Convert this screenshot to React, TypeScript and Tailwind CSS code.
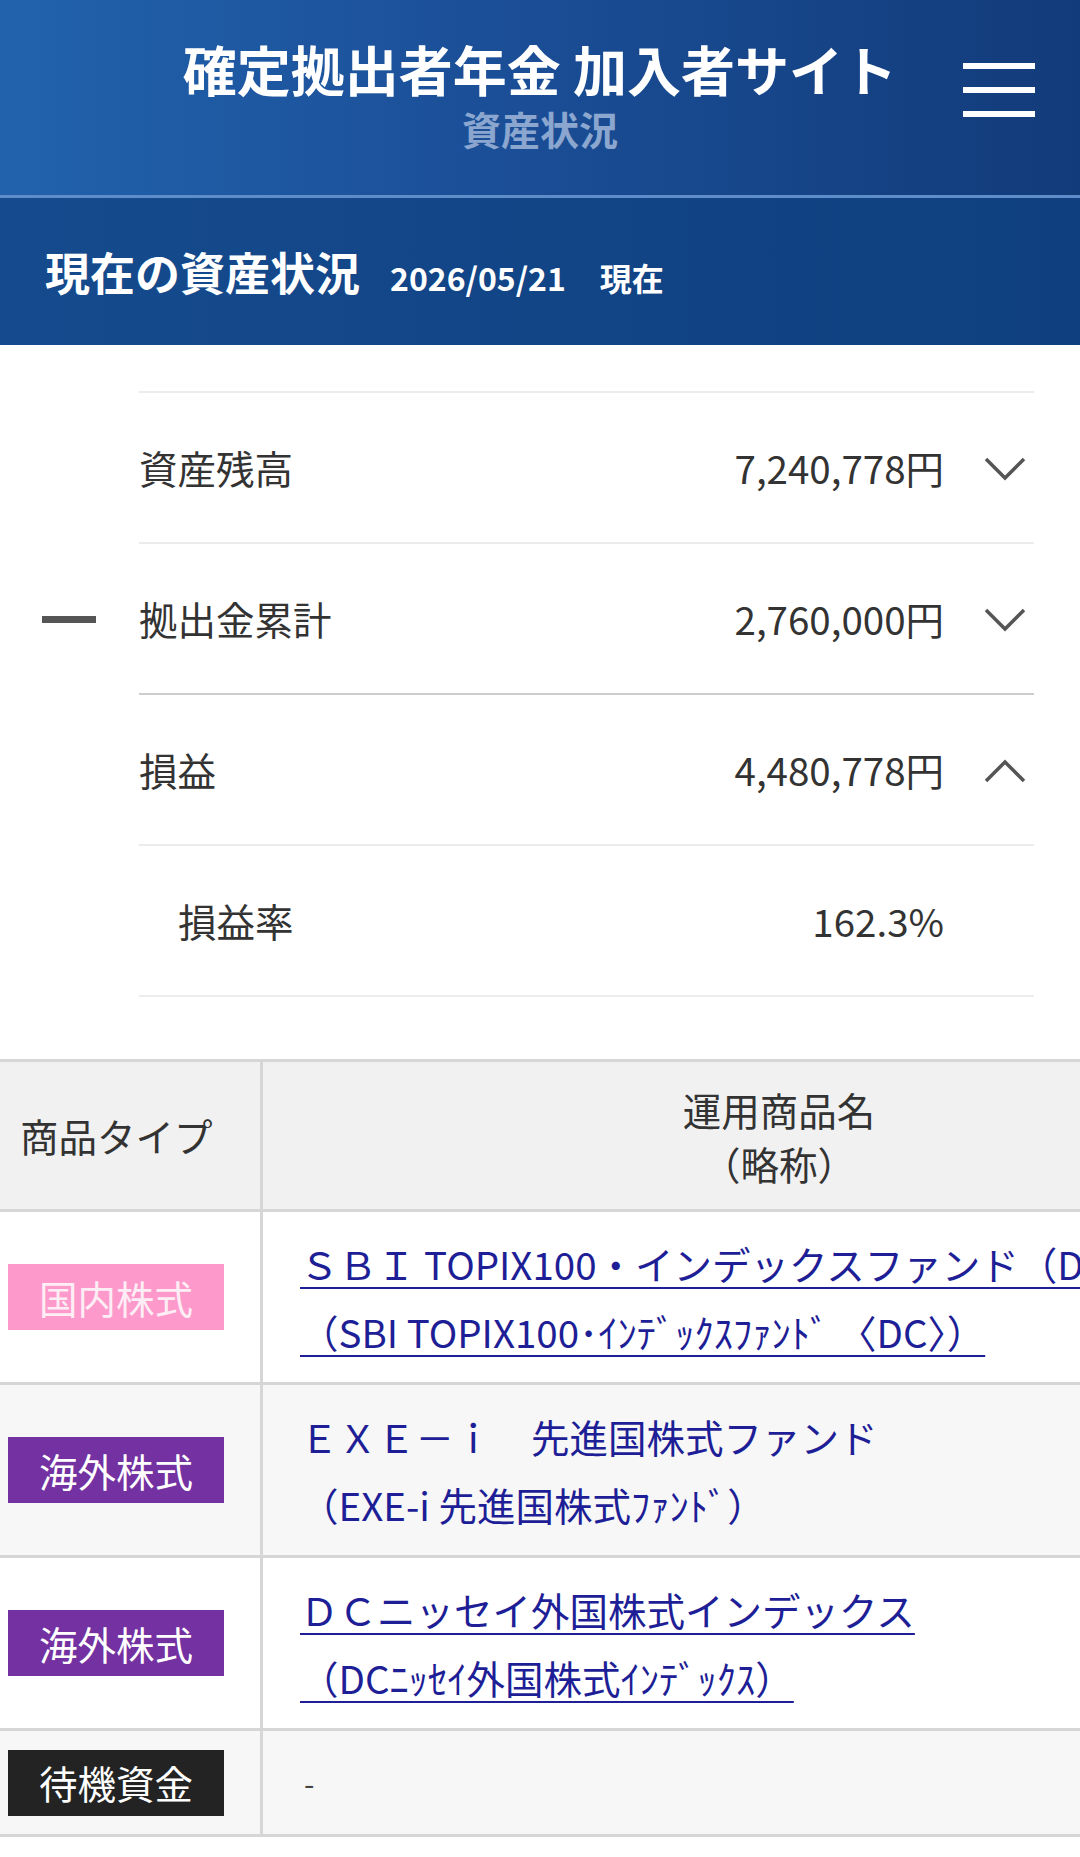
import React from "react";

function Chevron({ up }: { up?: boolean }) {
  return (
    <svg width="42" height="26" viewBox="0 0 42 26" fill="none">
      <polyline
        points={up ? "2,23 21,4 40,23" : "2,3 21,22 40,3"}
        stroke="#555"
        strokeWidth="3.5"
        strokeLinejoin="miter"
      />
    </svg>
  );
}

function Row({
  label,
  value,
  chevron,
  minus,
  indent,
  darkLine,
}: {
  label: string;
  value: string;
  chevron?: "down" | "up";
  minus?: boolean;
  indent?: boolean;
  darkLine?: boolean;
}) {
  return (
    <div className="flex">
      <div className="w-[139px] flex items-center">
        {minus && <div className="ml-[42px] w-[54px] h-[7px] bg-[#555]" />}
      </div>
      <div
        className={
          "flex-1 mr-[46px] h-[151px] flex items-center border-b-2 " +
          (darkLine ? "border-[#cdcdcd]" : "border-[#ececec]")
        }
      >
        <div className={"text-[38.5px] text-[#333] " + (indent ? "pl-[39px]" : "")}>{label}</div>
        <div className="ml-auto text-[38.5px] text-[#333]">{value}</div>
        <div className="w-[90px] flex pl-[40px] pt-[2px]">
          {chevron && <Chevron up={chevron === "up"} />}
        </div>
      </div>
    </div>
  );
}

function Badge({ text, cls }: { text: string; cls: string }) {
  return (
    <div className={"ml-[8px] w-[216px] h-[66px] flex items-center justify-center text-[38.5px] leading-none " + cls}>
      {text}
    </div>
  );
}

function TableRow({
  badge,
  children,
  bg,
  h,
}: {
  badge: React.ReactNode;
  children: React.ReactNode;
  bg: string;
  h: string;
}) {
  return (
    <div className={"flex border-b-[3px] border-[#d6d6d6] " + bg + " " + h}>
      <div className="w-[263px] shrink-0 border-r-[3px] border-[#d6d6d6] flex items-center">{badge}</div>
      <div className="flex-1 pl-[37px] flex flex-col justify-center overflow-hidden">{children}</div>
    </div>
  );
}

export default function App() {
  const link = "text-[38.5px] leading-[68px] text-[#1e1e96] whitespace-nowrap";
  const ul = " underline decoration-2 underline-offset-[7px]";
  return (
    <div className="w-[1080px] h-[1857px] overflow-hidden bg-white text-[#333] font-['Noto_Sans_CJK_JP','Noto_Sans',sans-serif]">
      {/* Header */}
      <div className="relative h-[195px] bg-gradient-to-r from-[#2262ad] via-[#1a4d95] to-[#123b7a] flex flex-col items-center">
        <div className="mt-[40px] text-[54px] leading-[58px] font-bold text-white">確定拠出者年金 加入者サイト</div>
        <div className="mt-[7px] text-[39px] leading-[46px] font-bold text-[#8ba6cf]">資産状況</div>
        <div className="absolute left-[963px] top-[63px] flex flex-col gap-[18px]">
          <div className="w-[72px] h-[6px] bg-white" />
          <div className="w-[72px] h-[6px] bg-white" />
          <div className="w-[72px] h-[6px] bg-white" />
        </div>
      </div>
      <div className="h-[3px] bg-[#5e8dc9]" />
      {/* Section bar */}
      <div className="h-[147px] bg-gradient-to-r from-[#154b8e] to-[#0f3f7f] flex items-baseline pl-[45px] pt-[46px] text-white font-bold">
        <span className="text-[45px] leading-[56px]">現在の資産状況</span>
        <span className="ml-[30px] text-[32px]">2026/05/21</span>
        <span className="ml-[34px] text-[32px]">現在</span>
      </div>

      {/* Summary */}
      <div className="mt-[46px]">
        <div className="flex">
          <div className="w-[139px]" />
          <div className="flex-1 mr-[46px] border-t-2 border-[#ececec]" />
        </div>
        <Row label="資産残高" value="7,240,778円" chevron="down" />
        <Row label="拠出金累計" value="2,760,000円" chevron="down" minus darkLine />
        <Row label="損益" value="4,480,778円" chevron="up" />
        <Row label="損益率" value="162.3%" indent />
      </div>

      {/* Table */}
      <div className="mt-[62px] w-[1295px] border-t-[3px] border-[#d6d6d6]">
        <div className="flex h-[150px] bg-[#f1f1f1] border-b-[3px] border-[#d6d6d6]">
          <div className="w-[263px] shrink-0 border-r-[3px] border-[#d6d6d6] flex items-center pl-[20px] text-[38.5px] text-[#333]">
            商品タイプ
          </div>
          <div className="flex-1 flex flex-col items-center justify-center text-[38.5px] leading-[54px] text-[#333]">
            <div>運用商品名</div>
            <div>（略称）</div>
          </div>
        </div>
        <TableRow
          bg="bg-white"
          h="h-[173px]"
          badge={<Badge text="国内株式" cls="bg-[#fd9acb] text-[#fdeef6]" />}
        >
          <div className={link + ul}>ＳＢＩ TOPIX100・インデックスファンド（DC）</div>
          <div className={link + ul}>（SBI TOPIX100･ｲﾝﾃﾞｯｸｽﾌｧﾝﾄﾞ 〈DC〉）</div>
        </TableRow>
        <TableRow
          bg="bg-[#f7f7f7]"
          h="h-[173px]"
          badge={<Badge text="海外株式" cls="bg-[#7331a2] text-white" />}
        >
          <div className={link}>ＥＸＥ－ｉ　先進国株式ファンド</div>
          <div className={link}>（EXE-i 先進国株式ﾌｧﾝﾄﾞ）</div>
        </TableRow>
        <TableRow
          bg="bg-white"
          h="h-[173px]"
          badge={<Badge text="海外株式" cls="bg-[#7331a2] text-white" />}
        >
          <div className={link + ul}>ＤＣニッセイ外国株式インデックス</div>
          <div className={link + ul}>（DCﾆｯｾｲ外国株式ｲﾝﾃﾞｯｸｽ）</div>
        </TableRow>
        <TableRow
          bg="bg-[#f7f7f7]"
          h="h-[106px]"
          badge={<Badge text="待機資金" cls="bg-[#232323] text-white" />}
        >
          <div className="text-[30px] text-[#444] pl-[4px]">-</div>
        </TableRow>
      </div>
    </div>
  );
}
